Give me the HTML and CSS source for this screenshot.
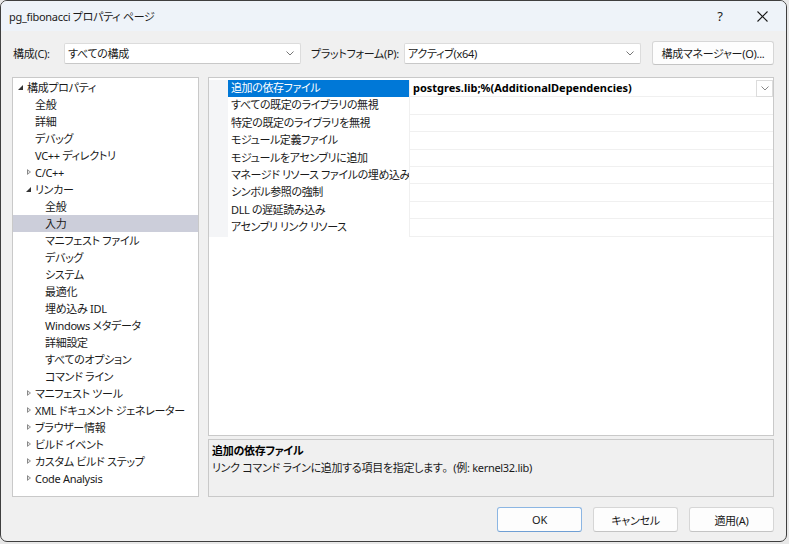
FILE: index.html
```html
<!DOCTYPE html>
<html lang="ja">
<head>
<meta charset="utf-8">
<title>pg_fibonacci プロパティ ページ</title>
<link rel="stylesheet" href="styles.css">
</head>
<body>
<div class="window">
  <div class="titlebar">
    <span class="title">pg_fibonacci プロパティ ページ</span>
    <span class="tb-help">?</span>
    <span class="tb-close"><svg width="11" height="11" viewBox="0 0 11 11"><path d="M0.5 0.5 L10.5 10.5 M10.5 0.5 L0.5 10.5" stroke="#1a1a1a" stroke-width="1.1" fill="none"/></svg></span>
  </div>
  <div class="content">
    <div class="toolbar">
      <span class="lbl lbl-conf">構成(C):</span>
      <div class="combo combo-conf"><span>すべての構成</span><svg class="chev" width="8" height="5" viewBox="0 0 8 5"><path d="M0.5 0.5 L4 4 L7.5 0.5" stroke="#777" fill="none"/></svg></div>
      <span class="lbl lbl-plat">プラットフォーム(P):</span>
      <div class="combo combo-plat"><span>アクティブ(x64)</span><svg class="chev" width="8" height="5" viewBox="0 0 8 5"><path d="M0.5 0.5 L4 4 L7.5 0.5" stroke="#777" fill="none"/></svg></div>
      <button class="btn btn-mgr">構成マネージャー(O)...</button>
    </div>
    <div class="main">
      <div class="tree">
        <div class="ti l0"><span class="exp"></span>構成プロパティ</div>
        <div class="ti l1">全般</div>
        <div class="ti l1">詳細</div>
        <div class="ti l1">デバッグ</div>
        <div class="ti l1">VC++ ディレクトリ</div>
        <div class="ti l1"><span class="col"></span>C/C++</div>
        <div class="ti l1"><span class="exp"></span>リンカー</div>
        <div class="ti l2">全般</div>
        <div class="ti l2 sel">入力</div>
        <div class="ti l2">マニフェスト ファイル</div>
        <div class="ti l2">デバッグ</div>
        <div class="ti l2">システム</div>
        <div class="ti l2">最適化</div>
        <div class="ti l2">埋め込み IDL</div>
        <div class="ti l2">Windows メタデータ</div>
        <div class="ti l2">詳細設定</div>
        <div class="ti l2">すべてのオプション</div>
        <div class="ti l2">コマンド ライン</div>
        <div class="ti l1"><span class="col"></span>マニフェスト ツール</div>
        <div class="ti l1"><span class="col"></span>XML ドキュメント ジェネレーター</div>
        <div class="ti l1"><span class="col"></span>ブラウザー情報</div>
        <div class="ti l1"><span class="col"></span>ビルド イベント</div>
        <div class="ti l1"><span class="col"></span>カスタム ビルド ステップ</div>
        <div class="ti l1"><span class="col"></span>Code Analysis</div>
      </div>
      <div class="right">
        <div class="grid">
          <div class="row selrow"><div class="gut"></div><div class="name">追加の依存ファイル</div><div class="val bold">postgres.lib;%(AdditionalDependencies)<span class="ddbtn"><svg width="8" height="5" viewBox="0 0 8 5"><path d="M0.5 0.5 L4 4 L7.5 0.5" stroke="#888" fill="none"/></svg></span></div></div>
          <div class="row"><div class="gut"></div><div class="name">すべての既定のライブラリの無視</div><div class="val"></div></div>
          <div class="row"><div class="gut"></div><div class="name">特定の既定のライブラリを無視</div><div class="val"></div></div>
          <div class="row"><div class="gut"></div><div class="name">モジュール定義ファイル</div><div class="val"></div></div>
          <div class="row"><div class="gut"></div><div class="name">モジュールをアセンブリに追加</div><div class="val"></div></div>
          <div class="row"><div class="gut"></div><div class="name">マネージド リソース ファイルの埋め込み</div><div class="val"></div></div>
          <div class="row"><div class="gut"></div><div class="name">シンボル参照の強制</div><div class="val"></div></div>
          <div class="row"><div class="gut"></div><div class="name">DLL の遅延読み込み</div><div class="val"></div></div>
          <div class="row"><div class="gut"></div><div class="name">アセンブリ リンク リソース</div><div class="val"></div></div>
        </div>
        <div class="desc">
          <div class="desc-title">追加の依存ファイル</div>
          <div class="desc-text">リンク コマンド ラインに追加する項目を指定します<span class="kuten">。</span>(例: kernel32.lib)</div>
        </div>
      </div>
    </div>
    <div class="buttons">
      <button class="btn dbtn default">OK</button>
      <button class="btn dbtn">キャンセル</button>
      <button class="btn dbtn">適用(A)</button>
    </div>
  </div>
</div>
</body>
</html>
```
FILE: styles.css
```css
* { box-sizing: border-box; }
html, body { margin: 0; padding: 0; }
body {
  width: 789px; height: 544px;
  background: #e8e8e8;
  font-family: "Noto Sans", "Noto Sans CJK JP", sans-serif;
  font-size: 11px;
  font-feature-settings: "palt";
  letter-spacing: -0.3px;
  color: #1a1a1a;
  overflow: hidden;
}
.window {
  width: 787px; height: 542px;
  border: 1px solid #3f3f3f;
  border-radius: 7px;
  background: #f0f0f0;
  display: flex; flex-direction: column;
  overflow: hidden;
}
.titlebar {
  height: 30px; flex: none;
  background: #eef3f9;
  display: flex; align-items: center;
  padding-left: 8px;
}
.title { flex: 1; font-size: 11px; color: #1a1a1a; }
.tb-help { width: 20px; font-size: 13px; margin-right: 27px; text-align: center; }
.tb-close { width: 12px; margin-right: 17px; display: flex; }
.content {
  flex: 1;
  display: flex; flex-direction: column;
  padding: 10px 12px 11px 11px;
}
.toolbar {
  height: 24px; flex: none;
  display: flex; align-items: center;
}
.lbl { white-space: nowrap; }
.lbl-conf { margin-left: 1px; width: 51px; }
.lbl-plat { margin-left: 10px; width: 93px; }
.combo {
  height: 21px;
  background: #fff;
  border: 1px solid #dcdcdc;
  border-bottom-color: #c8c8c8;
  border-radius: 2px;
  display: flex; align-items: center; justify-content: space-between;
  padding: 0 6px 0 3px;
  white-space: nowrap;
}
.combo-conf { width: 237px; }
.combo-plat { width: 237px; }
.chev { flex: none; }
.btn {
  font-family: inherit; font-size: 11px; font-feature-settings: "palt";
  letter-spacing: -0.3px;
  color: #1a1a1a;
  background: #fdfdfd;
  border: 1px solid #d6d6d6;
  border-bottom-color: #c4c4c4;
  border-radius: 3px;
  padding: 0;
  white-space: nowrap;
}
.btn-mgr { margin-left: auto; width: 122px; height: 24px; }
.main {
  flex: none; height: 420px;
  margin-top: 12px;
  display: flex; gap: 9px;
}
.tree {
  width: 187px; flex: none;
  background: #fff;
  border: 1px solid #c9c9c9;
  padding-top: 1px;
}
.ti {
  height: 17px; line-height: 17px;
  white-space: nowrap;
  display: flex; align-items: center;
}
.ti.l0 { padding-left: 4px; }
.ti.l1 { padding-left: 22px; }
.ti.l2 { padding-left: 32px; }
.ti.sel { background: #ccceda; }
.exp, .col { width: 9px; flex: none; margin-right: 1px; position: relative; height: 17px; }
.l1 .exp, .l1 .col { margin-left: -10px; }
.exp::before {
  content: ""; position: absolute; left: 1px; top: 6px;
  border-style: solid; border-width: 0 0 5px 5px;
  border-color: transparent transparent #333 transparent;
}
.col::before {
  content: ""; position: absolute; left: 2px; top: 5px;
  width: 0; height: 0;
  border-style: solid; border-width: 3.5px 0 3.5px 4px;
  border-color: transparent transparent transparent #888;
}
.col::after {
  content: ""; position: absolute; left: 3px; top: 7px;
  border-style: solid; border-width: 1.5px 0 1.5px 2px;
  border-color: transparent transparent transparent #fff;
}
.right {
  flex: 1;
  display: flex; flex-direction: column; gap: 3px;
}
.grid {
  height: 359px; flex: none;
  background: #fff;
  border: 1px solid #c9c9c9;
  padding-top: 2px;
}
.row {
  height: 17.4px;
  display: flex;
}
.gut { width: 19px; flex: none; background: #f4f5f7; }
.name {
  width: 182px; flex: none;
  padding-left: 3px;
  line-height: 16px;
  letter-spacing: -0.4px;
  white-space: nowrap; overflow: hidden;
  border-right: 1px solid #f0f0f0;
}
.val {
  flex: 1;
  padding-left: 3px;
  line-height: 16px;
  border-bottom: 1px solid #f0f0f0;
  position: relative;
  white-space: nowrap;
}
.selrow .name { background: #0078d7; color: #fff; }
.bold { font-weight: bold; color: #000; letter-spacing: 0; }
.ddbtn {
  position: absolute; right: 0; top: 0;
  width: 17px; height: 17px;
  border: 1px solid #dcdcdc;
  background: #fff;
  display: flex; align-items: center; justify-content: center;
}
.desc {
  flex: 1;
  background: #f0f0f0;
  border: 1px solid #c9c9c9;
  padding: 2px 3px;
}
.desc-title { font-weight: bold; line-height: 17px; color: #000; }
.desc-text { line-height: 17px; }
.kuten { font-feature-settings: normal; }
.buttons {
  height: 25px; flex: none;
  margin-top: 10px;
  display: flex; justify-content: flex-end; gap: 11px;
}
.dbtn { width: 85px; height: 25px; }
.dbtn.default { border: 1px solid #8cb6e3; border-bottom-color: #6f9fd4; }
```
